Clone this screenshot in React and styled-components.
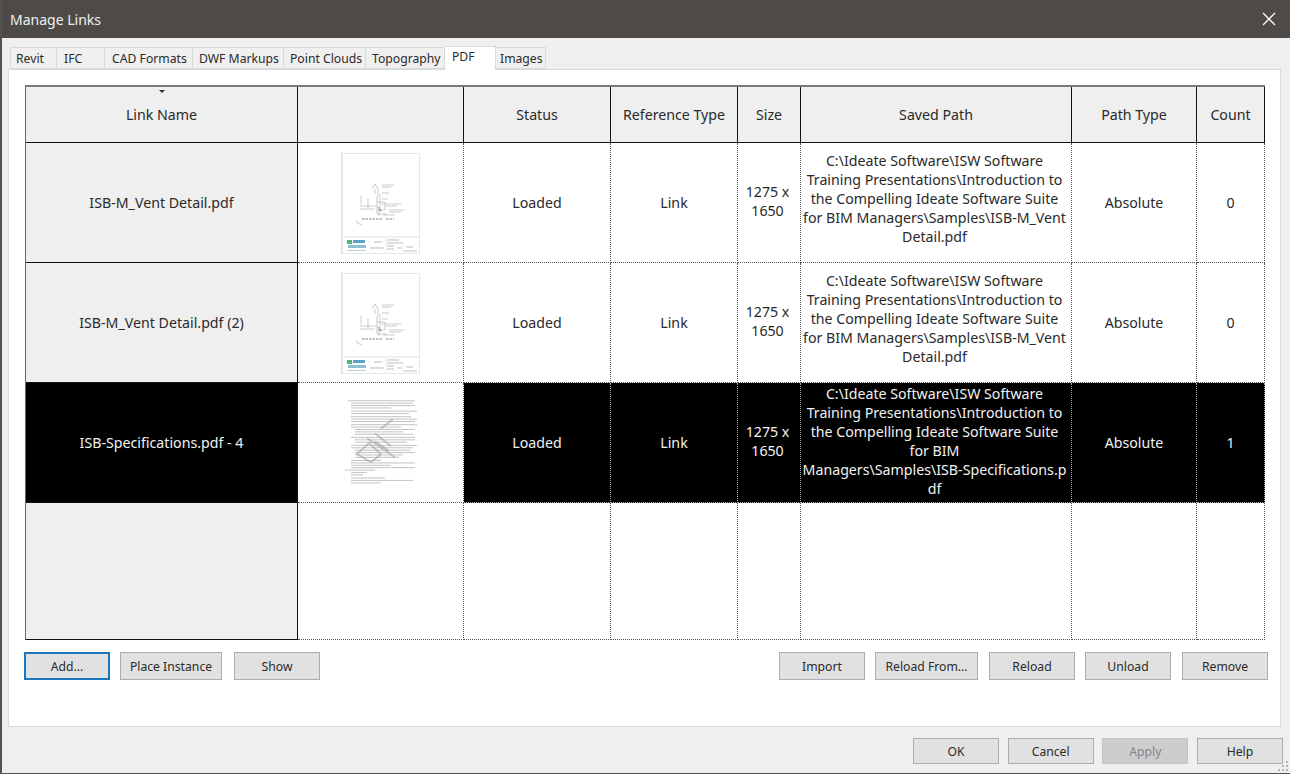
import React from 'react';
import styled, { createGlobalStyle } from 'styled-components';

const GlobalStyle = createGlobalStyle`
  html, body {
    margin: 0;
    padding: 0;
    background: #efefef;
    overflow: hidden;
  }
  * {
    box-sizing: border-box;
  }
`;

const Window = styled.div`
  position: relative;
  width: 1290px;
  height: 774px;
  display: flex;
  flex-direction: column;
  background: #efefef;
  border-left: 2px solid #55524f;
  border-bottom: 1px solid #55524f;
  font-family: "Noto Sans", "Open Sans", sans-serif;
  color: #2a2a2a;
  overflow: hidden;
`;

const TitleBar = styled.header`
  height: 38px;
  margin-left: -2px;
  padding: 0 14px 0 10px;
  flex: none;
  display: flex;
  align-items: center;
  justify-content: space-between;
  background: #4d4a47;
  color: #f0f0f0;
  font-size: 14px;
`;

const CloseIcon = () => (
  <svg width="14" height="14" viewBox="0 0 14 14" fill="none" stroke="#fff" strokeWidth="1.3">
    <path d="M1 1 L13 13 M13 1 L1 13" />
  </svg>
);

const Body = styled.div`
  flex: 1;
  display: flex;
  flex-direction: column;
  padding: 8px 9px 0 6px;
`;

const TabStrip = styled.nav`
  position: relative;
  z-index: 1;
  height: 24px;
  margin: 0 0 -1px 2px;
  display: flex;
  align-items: flex-end;
  font-size: 12.2px;
`;

const Tab = styled.div`
  width: ${p => p.$width}px;
  height: ${p => (p.$active ? 24 : 22)}px;
  padding-left: ${p => p.$pad}px;
  padding-top: ${p => (p.$active ? 1 : 2)}px;
  margin-bottom: ${p => (p.$active ? 0 : 1)}px;
  background: ${p => (p.$active ? '#fff' : '#f0f0f0')};
  border: 1px solid #d9d9d9;
  border-left-width: ${p => (p.$first ? 1 : 0)}px;
  border-bottom-width: ${p => (p.$active ? 0 : 1)}px;
  white-space: nowrap;
`;

const Panel = styled.section`
  width: 1273px;
  height: 658px;
  flex: none;
  padding: 15px 15px 0 16px;
  background: #fff;
  border: 1px solid #d9d9d9;
`;

const Table = styled.div`
  display: grid;
  grid-template-columns: 272px 166px 147px 127px 63px 271px 125px 68px;
  grid-template-rows: 56px 120px 120px 120px 137px;
  border-top: 2px solid #7a7a7a;
  border-left: 1px solid #666;
  font-size: 14.2px;
  line-height: 19px;
`;

const Cell = styled.div`
  position: relative;
  display: flex;
  flex-direction: column;
  align-items: center;
  justify-content: center;
  text-align: center;
  white-space: nowrap;
`;

const HeadCell = styled(Cell)`
  background: #efefef;
  border-right: 1px solid #111;
  border-bottom: 1px solid #111;
`;

const RowHead = styled(Cell)`
  background: ${p => (p.$selected ? '#000' : '#efefef')};
  color: ${p => (p.$selected ? '#f2f2f2' : '#2a2a2a')};
  border-right: 1px solid #111;
  border-bottom: 1px solid #111;
`;

const DataCell = styled(Cell)`
  background: ${p => (p.$selected ? '#000' : '#fff')};
  color: ${p => (p.$selected ? '#f2f2f2' : '#2a2a2a')};
  padding-bottom: ${p => p.$lift || 0}px;
  padding-right: ${p => p.$shift || 0}px;
  border-right: 1px dotted ${p => (p.$selected ? '#aaa' : '#555')};
  border-bottom: 1px dotted ${p => (p.$selected ? '#aaa' : '#555')};
`;

const ThumbCell = styled(DataCell)`
  padding: ${p => p.$top}px 0 0 ${p => p.$left}px;
`;

const SortCaret = styled.span`
  position: absolute;
  top: 3px;
  left: 133px;
  width: 0;
  height: 0;
  border-left: 3px solid transparent;
  border-right: 3px solid transparent;
  border-top: 3px solid #333;
`;

const ActionRow = styled.div`
  margin: 12px -3px 0 -1px;
  display: flex;
  justify-content: space-between;
`;

const ButtonGroup = styled.div`
  display: flex;
  gap: 10px;
`;

const Button = styled.button`
  width: ${p => p.$width || 86}px;
  height: ${p => p.$height || 28}px;
  margin-left: ${p => p.$offset || 0}px;
  padding: 0;
  font-family: inherit;
  font-size: 12.2px;
  color: ${p => (p.$disabled ? '#858585' : '#2a2a2a')};
  background: ${p => (p.$disabled ? '#cdcdcd' : '#e1e1e1')};
  border: ${p => (p.$focused ? '2px solid #1a76bd' : `1px solid ${p.$disabled ? '#c4c4c4' : '#adadad'}`)};
  border-radius: 0;
`;

const Footer = styled.footer`
  margin-top: 11px;
  margin-right: -2px;
  display: flex;
  justify-content: flex-end;
  gap: 8.67px;
`;

const Grip = styled.svg`
  position: absolute;
  right: 1px;
  bottom: 1px;
`;

const Soft = styled.svg`
  filter: blur(0.35px);
`;

const DrawingThumb = () => (
  <Soft width="80" height="104" viewBox="0 0 80 104">
    <rect x="1.5" y="1.5" width="77" height="100" fill="#fff" stroke="#e8e8e8" />
    <line x1="0.5" y1="0" x2="0.5" y2="103" stroke="#e2e2e2" />
    <g stroke="#a8a8a8" strokeWidth="0.6" fill="none">
      <path d="M31 37 L34 32 L37 37 L37 44 M34 37 L34 42" />
      <path d="M36 44 L36 62 M39 42 L39 60 M20 44 L20 52 M27 46 L27 56" />
      <path d="M19 54 L36 54 M19 57 L34 57 M36 50 L44 50 L44 58 L36 58" />
      <path d="M36 62 L46 62 M38 58 L38 64" />
      <path d="M41 33 L53 33 M41 35 L50 35 M41 41 L48 41 M41 47 L47 47 M41 52 L60 52 M45 54 L56 54 M48 58 L64 58 M48 60 L60 60 M42 63 L54 63" />
      <path d="M16 68 L16 71 L21 73" />
    </g>
    <g stroke="#666" strokeWidth="0.8">
      <path d="M21 67 L42 67 M45 67 L53 67" strokeDasharray="2.5 1" />
      <path d="M37 55 L40 59" />
    </g>
    <line x1="1.5" y1="85" x2="78.5" y2="85" stroke="#e0e0e0" />
    <rect x="6" y="88" width="5" height="4" fill="#5aae78" />
    <rect x="12" y="88" width="12" height="3" fill="#5aa5c5" />
    <rect x="7" y="93" width="18" height="3" fill="#8cc0d6" />
    <rect x="6" y="98" width="19" height="1" fill="#b4d6bf" />
    <g stroke="#a0a0a0" strokeWidth="0.7">
      <path d="M33 90 L41 90 M29 96 L43 96 M46 88 L58 88 M46 91 L62 91 M46 94 L53 94 M46 97 L53 97 M56 96 L61 96 M65 95 L72 95 M63 99 L76 99" />
    </g>
    <path d="M45 86 L45 101 M62 92 L62 101" stroke="#e2e2e2" strokeWidth="0.6" />
  </Soft>
);

// rough line lengths of the specification page
const specLines = [
  [3, 1, 67], [6, 4, 62], [6, 7, 64], [6, 10, 40], [6, 14, 66], [6, 17, 58], [6, 21, 60], [6, 24, 66],
  [6, 27, 64], [6, 31, 66], [6, 34, 50], [10, 37, 60], [10, 40, 48], [10, 43, 58], [6, 47, 64], [10, 50, 60],
  [10, 53, 52], [6, 57, 66], [6, 60, 62], [10, 63, 56], [10, 66, 60], [10, 69, 48], [10, 72, 44], [6, 76, 30],
  [6, 79, 64], [6, 82, 40], [6, 85, 64], [0, 88, 30], [6, 91, 16], [6, 94, 12], [6, 98, 34], [6, 101, 62], [6, 104, 30],
];

const SpecThumb = () => (
  <Soft width="72" height="86" viewBox="0 0 72 108" preserveAspectRatio="none">
    <g stroke="#b4b4b4" strokeWidth="0.9">
      {specLines.map(([x, y, w]) => (
        <line key={y} x1={x} y1={y} x2={x + w} y2={y} />
      ))}
    </g>
    <g stroke="#a4a4a4" strokeWidth="2" fill="none" opacity="0.65">
      <path d="M12 68 L24 54 L36 68 L26 78 Z" />
      <path d="M22 48 L50 72 M30 42 L46 58 M36 36 L48 24 M30 52 L44 64" />
    </g>
  </Soft>
);

const pathLines = [
  'C:\\Ideate Software\\ISW Software',
  'Training Presentations\\Introduction to',
  'the Compelling Ideate Software Suite',
  'for BIM Managers\\Samples\\ISB-M_Vent',
  'Detail.pdf',
];

const specPathLines = [
  'C:\\Ideate Software\\ISW Software',
  'Training Presentations\\Introduction to',
  'the Compelling Ideate Software Suite',
  'for BIM',
  'Managers\\Samples\\ISB-Specifications.p',
  'df',
];

const rows = [
  { name: 'ISB-M_Vent Detail.pdf', thumb: <DrawingThumb />, path: pathLines, count: 0, top: 3, left: 1 },
  { name: 'ISB-M_Vent Detail.pdf (2)', thumb: <DrawingThumb />, path: pathLines, count: 0, top: 3, left: 1 },
  { name: 'ISB-Specifications.pdf - 4', thumb: <SpecThumb />, path: specPathLines, count: 1, selected: true, top: 0, left: 0 },
];

const columns = ['', 'Status', 'Reference Type', 'Size', 'Saved Path', 'Path Type', 'Count'];

const tabs = [
  { label: 'Revit', width: 47, pad: 5 },
  { label: 'IFC', width: 48, pad: 7 },
  { label: 'CAD Formats', width: 88, pad: 7 },
  { label: 'DWF Markups', width: 91, pad: 6 },
  { label: 'Point Clouds', width: 82, pad: 6 },
  { label: 'Topography', width: 79, pad: 6 },
  { label: 'PDF', width: 51, pad: 7, active: true },
  { label: 'Images', width: 50, pad: 4 },
];

const App = () => (
  <Window>
    <GlobalStyle />
    <TitleBar>
      <span>Manage Links</span>
      <CloseIcon />
    </TitleBar>
    <Body>
      <TabStrip>
        {tabs.map((tab, i) => (
          <Tab key={tab.label} $width={tab.width} $pad={tab.pad} $active={tab.active} $first={i === 0}>
            {tab.label}
          </Tab>
        ))}
      </TabStrip>
      <Panel>
        <Table>
          <HeadCell>
            <SortCaret />
            Link Name
          </HeadCell>
          {columns.map((col, i) => (
            <HeadCell key={i}>{col}</HeadCell>
          ))}
          {rows.map(row => (
            <React.Fragment key={row.name}>
              <RowHead $selected={row.selected}>{row.name}</RowHead>
              <ThumbCell $top={row.top} $left={row.left}>{row.thumb}</ThumbCell>
              <DataCell $selected={row.selected}>Loaded</DataCell>
              <DataCell $selected={row.selected}>Link</DataCell>
              <DataCell $selected={row.selected} $lift={4} $shift={3}>
                <div>1275 x</div>
                <div>1650</div>
              </DataCell>
              <DataCell $selected={row.selected} $lift={row.selected ? 4 : 8} $shift={3}>
                {row.path.map(line => (
                  <div key={line}>{line}</div>
                ))}
              </DataCell>
              <DataCell $selected={row.selected}>Absolute</DataCell>
              <DataCell $selected={row.selected}>{row.count}</DataCell>
            </React.Fragment>
          ))}
          <RowHead />
          {columns.map((col, i) => (
            <DataCell key={i} />
          ))}
        </Table>
        <ActionRow>
          <ButtonGroup>
            <Button $focused>Add...</Button>
            <Button $width={102}>Place Instance</Button>
            <Button $offset={2}>Show</Button>
          </ButtonGroup>
          <ButtonGroup>
            <Button>Import</Button>
            <Button $width={103}>Reload From...</Button>
            <Button $offset={1}>Reload</Button>
            <Button>Unload</Button>
            <Button $offset={1}>Remove</Button>
          </ButtonGroup>
        </ActionRow>
      </Panel>
      <Footer>
        <Button $height={26}>OK</Button>
        <Button $height={26}>Cancel</Button>
        <Button $height={26} $disabled>Apply</Button>
        <Button $height={26}>Help</Button>
      </Footer>
    </Body>
    <Grip width="11" height="11" viewBox="0 0 11 11" fill="#b5b5b5">
      <rect x="8" y="0" width="2" height="2" />
      <rect x="4" y="4" width="2" height="2" />
      <rect x="8" y="4" width="2" height="2" />
      <rect x="0" y="8" width="2" height="2" />
      <rect x="4" y="8" width="2" height="2" />
      <rect x="8" y="8" width="2" height="2" />
    </Grip>
  </Window>
);

export default App;
